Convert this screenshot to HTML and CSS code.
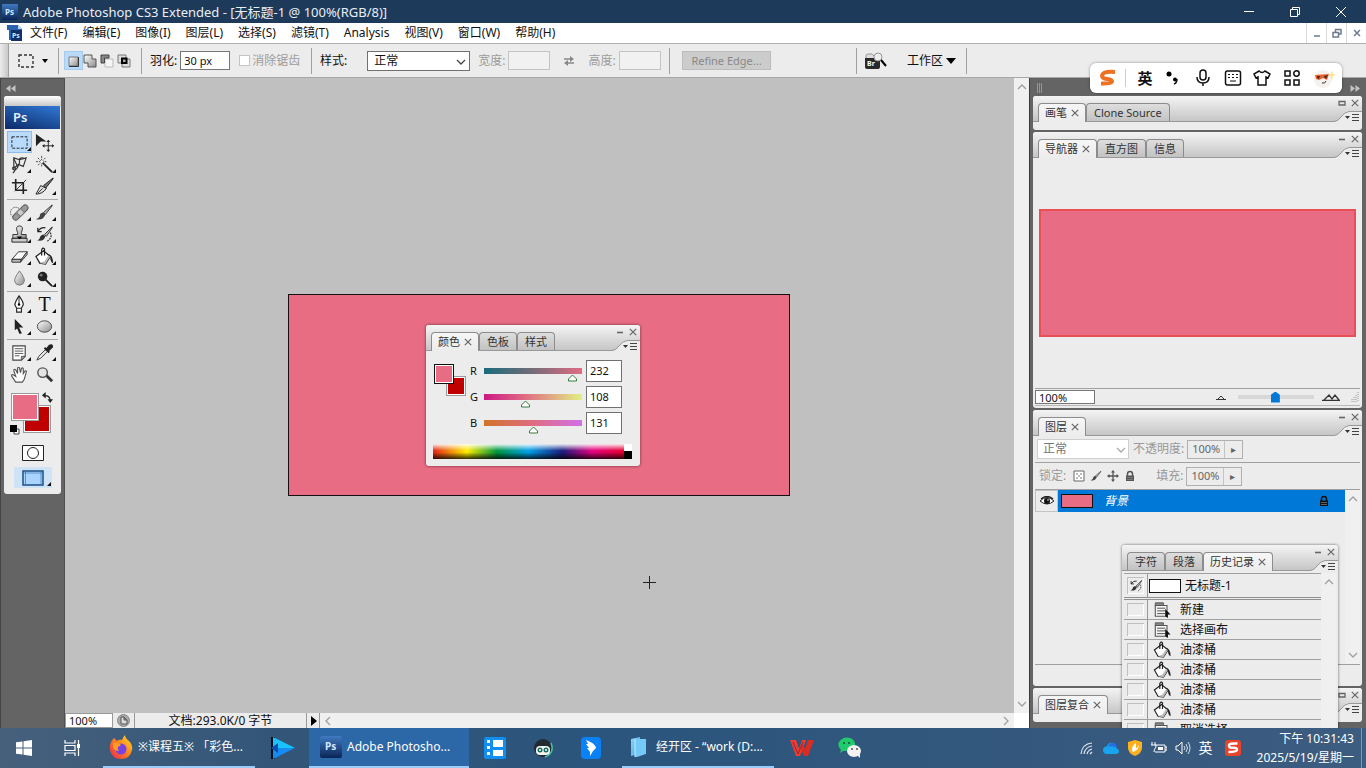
FILE: index.html
```
<!DOCTYPE html>
<html lang="zh-CN">
<head>
    <meta charset="UTF-8">
    <meta name="viewport" content="width=device-width, initial-scale=1.0">
    <title>Adobe Photoshop CS3 Extended</title>
    <link rel="stylesheet" href="styles.css">
</head>
<body>
    <!-- Shared icons -->
    <svg class="sprite" aria-hidden="true">
        <defs>
            <linearGradient id="psBlue" x1="0" y1="0" x2="0" y2="1"><stop offset="0" stop-color="#3f7ac0"/><stop offset="1" stop-color="#0b2457"/></linearGradient>
            <linearGradient id="steel" x1="0" y1="0" x2="1" y2="1"><stop offset="0" stop-color="#ffffff"/><stop offset="1" stop-color="#8c8c8c"/></linearGradient>
            <linearGradient id="fox" x1="1" y1="0" x2="0" y2="1"><stop offset="0" stop-color="#ffe226"/><stop offset="0.45" stop-color="#ff8a1e"/><stop offset="1" stop-color="#f0204e"/></linearGradient>
            <linearGradient id="sky" x1="0" y1="0" x2="1" y2="1"><stop offset="0" stop-color="#8fd9fb"/><stop offset="1" stop-color="#3d9fdc"/></linearGradient>
        </defs>
        <symbol id="i-x" viewBox="0 0 8 8"><path d="M.8.8l6.4 6.4M7.2.8L.8 7.2" stroke="#666" stroke-width="1.2"/></symbol>
        <symbol id="i-min" viewBox="0 0 8 8"><path d="M1 4.500h6" stroke="#666" stroke-width="1.6"/></symbol>
        <symbol id="i-max" viewBox="0 0 8 8"><path d="M1 2.500h6v3.500H1z" fill="none" stroke="#666" stroke-width="1.3"/></symbol>
        <symbol id="i-notch" viewBox="0 0 28 11"><path d="M0 10.500Q4 10.500 7 6T15 .5H28V11H0z" fill="#ececec"/><path d="M0 10.500Q4 10.500 7 6T15 .5H28" fill="none" stroke="#999"/><path d="M11 5h5l-2.500 3z" fill="#333"/><path d="M18 3.500h7M18 6.500h7M18 9.500h7" stroke="#444"/></symbol>
        <symbol id="i-chev" viewBox="0 0 10 10"><path d="M1 3l4 4 4-4" fill="none" stroke="currentColor" stroke-width="1.3"/></symbol>
        <symbol id="i-bucket" viewBox="0 0 20 20"><path d="M1 10l8-6 7 6-5 8-6-1z" fill="#fff" stroke="#222" stroke-width="1.300"/><path d="M5 17l6 1 5-8-2-1-4 6z" fill="#bbb"/><path d="M7 9V3q1-3 3-1v7" fill="none" stroke="#222" stroke-width="1.300"/><path d="M13 7q6 1 6 10-3-1-3-7z" fill="#222"/></symbol>
        <symbol id="i-brush" viewBox="0 0 20 20"><path d="M18 2l-9 8 2 2 7-9z" fill="#bbb" stroke="#333"/><path d="M9 10q-4 0-4 4-1 2-4 3 7 2 10-5z" fill="#444"/></symbol>
        <symbol id="i-histbrush" viewBox="0 0 20 20"><path d="M18 2l-8 8 2 2 6-9z" fill="#bbb" stroke="#333"/><path d="M9 10q-4 1-4 4-1 2-3 2 7 2 9-4z" fill="#333"/><path d="M3 7q3-5 8-4M3 3v4h4" fill="none" stroke="#222" stroke-width="1.300"/><path d="M16 8q3 5-3 9" fill="none" stroke="#333" stroke-width="1.300" stroke-dasharray="2 1"/></symbol>
        <symbol id="i-lock" viewBox="0 0 12 12"><path d="M3.500 6V4a2.500 2.500 0 015 0v2" fill="none" stroke="currentColor" stroke-width="1.500"/><path d="M2 5.500h8V11H2z" fill="currentColor"/><path d="M3 7.500h6M3 9.500h6" stroke="#999" stroke-width=".6"/></symbol>
        <symbol id="i-doc" viewBox="0 0 20 20"><path d="M2 2h9v3H2z" fill="#888" stroke="#555"/><path d="M2 5h13v12H2z" fill="#f5f5f5" stroke="#555" stroke-width="1.200"/><path d="M4 8h9M4 11h9M4 14h9" stroke="#444"/><path d="M13 9l6 6h-3v4l-3-2z" fill="#111"/></symbol>
        <symbol id="i-sogou" viewBox="0 0 20 20"><path d="M17 3Q5 2 4 6.500 4 9.500 9 10q5 .5 5 2.500-1 2.500-11 2" fill="none" stroke="currentColor" stroke-width="4"/></symbol>
    </svg>

    <header class="titlebar">
        <svg class="ps-mini" viewBox="0 0 16 16"><rect width="16" height="16" rx="1" fill="url(#psBlue)"/><text x="3" y="11" class="ps-text">Ps</text></svg>
        <h1>Adobe Photoshop CS3 Extended - [无标题-1 @ 100%(RGB/8)]</h1>
        <div class="window-buttons">
            <button aria-label="最小化"><svg viewBox="0 0 12 12"><path d="M1 5.500h10"/></svg></button>
            <button aria-label="还原"><svg viewBox="0 0 12 12"><path d="M1.500 3.500h7v7h-7zM3.500 3.500v-2h7v7h-2"/></svg></button>
            <button aria-label="关闭"><svg viewBox="0 0 12 12"><path d="M1 1l10 10M11 1L1 11"/></svg></button>
        </div>
    </header>

    <nav class="menubar">
        <svg class="doc-icon" viewBox="0 0 16 16"><path d="M0 0h11l4 4v11H2V5H0z" fill="#2b62ad"/><path d="M11 0l4 4h-4z" fill="#b8d4f5"/><path d="M4 5h11v11H4z" fill="#112f68"/><text x="5" y="13" class="ps-text small">Ps</text></svg>
        <a href="#">文件(F)</a>
        <a href="#">编辑(E)</a>
        <a href="#">图像(I)</a>
        <a href="#">图层(L)</a>
        <a href="#">选择(S)</a>
        <a href="#">滤镜(T)</a>
        <a href="#">Analysis</a>
        <a href="#">视图(V)</a>
        <a href="#">窗口(W)</a>
        <a href="#">帮助(H)</a>
        <div class="doc-buttons">
            <button aria-label="最小化文档"><svg viewBox="0 0 10 10"><path d="M2 8h6"/></svg></button>
            <button aria-label="还原文档"><svg viewBox="0 0 10 10"><path d="M1 4.500h5.500V9H1zM3.500 4V1.500H9V6H7"/></svg></button>
            <button aria-label="关闭文档"><svg viewBox="0 0 10 10"><path d="M2 2l6 6M8 2L2 8"/></svg></button>
        </div>
    </nav>

    <div class="options">
        <div class="grip"></div>
        <button class="tool-preset" aria-label="矩形选框工具">
            <svg width="16" height="14" viewBox="0 0 16 14"><path d="M1 1h14v12H1z" fill="none" stroke="#333" stroke-width="1.400" stroke-dasharray="3 2"/></svg>
            <svg width="6" height="4" viewBox="0 0 6 4"><path d="M0 0h6L3 4z"/></svg>
        </button>
        <div class="modes">
            <button class="on" aria-label="新选区"><svg viewBox="0 0 14 14"><path d="M3 3h9v9H3z" fill="url(#steel)" stroke="#777"/><path d="M3 12.500h9.500V3" fill="none" stroke="#333"/></svg></button>
            <button aria-label="添加到选区"><svg viewBox="0 0 14 14"><path d="M1 1h8v4h4v8H5V9H1z" fill="url(#steel)" stroke="#555"/></svg></button>
            <button aria-label="从选区减去"><svg viewBox="0 0 14 14"><path d="M5 5h8v8H5z" fill="#f5f5f5" stroke="#bbb"/><path d="M1 1h8v3H4.500v5H1z" fill="#888" stroke="#444"/></svg></button>
            <button aria-label="与选区交叉"><svg viewBox="0 0 14 14"><path d="M1 1h8v8H1zM5 5h8v8H5z" fill="#ddd" stroke="#777"/><path d="M5 4.500h4.500V9H5z" fill="#aaa" stroke="#000" stroke-width="2"/></svg></button>
        </div>
        <div class="field feather">
            <label for="feather">羽化:</label>
            <input type="text" id="feather" value="30 px">
            <input type="checkbox" id="alias" disabled>
            <label for="alias" class="off">消除锯齿</label>
        </div>
        <div class="field style-field">
            <label for="style">样式:</label>
            <div class="select-box">
                <select id="style"><option>正常</option></select>
                <svg class="chev"><use href="#i-chev"/></svg>
            </div>
            <label for="w" class="off">宽度:</label>
            <input type="text" id="w" disabled>
            <svg class="swap" viewBox="0 0 12 10"><path d="M1 3h7M4 7h7" stroke="#888" stroke-width="1.400"/><path d="M7 0l4 3-4 3zM5 4L1 7l4 3z" fill="#888"/></svg>
            <label for="h" class="off">高度:</label>
            <input type="text" id="h" disabled>
        </div>
        <div class="field refine"><button disabled>Refine Edge...</button></div>
        <div class="field work">
            <button aria-label="Bridge"><svg width="22" height="18" viewBox="0 0 22 18"><path d="M1 4q0-2 2-2h4l2 2h5v4H1z" fill="#ddd" stroke="#999"/><path d="M0 6h15v9q0 2-2 2H2q-2 0-2-2z" fill="#292929"/><text x="2" y="14" class="br-text">Br</text><circle cx="13" cy="5" r="4" fill="#eee" stroke="#999"/><path d="M16 8l5 6" stroke="#000" stroke-width="2"/></svg></button>
            <button class="workspace-button">工作区<svg width="10" height="6" viewBox="0 0 10 6"><path d="M0 0h10L5 6z"/></svg></button>
        </div>
    </div>

    <main class="workspace">
        <aside class="tool-dock">
            <div class="collapse"><svg width="10" height="7" viewBox="0 0 10 7"><path d="M4.500 0v7L0 3.500zM9.500 0v7L5 3.500z" fill="#c4c4c4"/></svg></div>
            <div class="toolbox">
                <div class="tool-grip"></div>
                <div class="tool-logo">Ps</div>
                <div class="tools">
                    <button class="more on" aria-label="选框"><svg viewBox="0 0 20 20"><path d="M2 4h16v12H2z" fill="none" stroke="#222" stroke-dasharray="3 1.500"/></svg></button>
                    <button aria-label="移动"><svg viewBox="0 0 20 20"><path d="M1 1l11 8-6 0-5 5z" fill="#222"/><path d="M14 8v11M8.500 13.500h11" stroke="#222"/><path d="M12 9.500L14 7l2 2.500zM12 17.500l2 2.500 2-2.500zM10 11.500l-2.500 2 2.500 2zM18 11.500l2 2-2 2z" fill="#222"/></svg></button>
                    <button class="more" aria-label="套索"><svg viewBox="0 0 20 20"><path d="M4 3l6 2 7-2-3 9-5-2-5 4z" fill="none" stroke="#333" stroke-width="1.200"/><path d="M4 4l4 8M3 19q4-4 2-6-3-1-2 2 3 2 5-2l2-5V4q3-2 5 0" fill="none" stroke="#333" stroke-width="1.200"/></svg></button>
                    <button class="more" aria-label="魔棒"><svg viewBox="0 0 20 20"><path d="M8 8l10 10" stroke="#222" stroke-width="2"/><path d="M7 1v12M1 7h12M3 3l8 8M11 3l-8 8" stroke="#444" stroke-dasharray="2 1"/><circle cx="7" cy="7" r="1.500" fill="#fff"/></svg></button>
                    <button aria-label="裁剪"><svg viewBox="0 0 20 20"><path d="M6 2v12h12M2 6h12v12" fill="none" stroke="#222" stroke-width="1.700"/><path d="M5 15L17 3" stroke="#333"/></svg></button>
                    <button class="more" aria-label="切片"><svg viewBox="0 0 20 20"><path d="M19 1L9 9l2 3 8-10z" fill="#777" stroke="#222"/><path d="M1 18L6 9l6 3q-4 6-11 6z" fill="#ddd" stroke="#222"/><path d="M3 17l5-5" stroke="#333"/></svg></button>
                </div>
                <div class="tools">
                    <button class="more" aria-label="修复画笔"><svg viewBox="0 0 20 20"><circle cx="6" cy="10" r="5.500" fill="none" stroke="#333" stroke-dasharray="1 1"/><g transform="rotate(-45 11 10)"><rect x="1" y="7" width="20" height="6" rx="3" fill="#999" stroke="#555"/><rect x="8" y="7" width="6" height="6" fill="#ccc" stroke="#777"/></g></svg></button>
                    <button class="more" aria-label="画笔"><svg><use href="#i-brush"/></svg></button>
                    <button class="more" aria-label="仿制图章"><svg viewBox="0 0 20 20"><path d="M8 8Q5 1 10 1t2 7v2h5v4H3v-4h5z" fill="url(#steel)" stroke="#333"/><path d="M2 14h16v4H2z" fill="#ccc" stroke="#222"/><path d="M7 12h6l-3 3z"/></svg></button>
                    <button class="more" aria-label="历史记录画笔"><svg><use href="#i-histbrush"/></svg></button>
                    <button class="more" aria-label="橡皮擦"><svg viewBox="0 0 20 20"><path d="M2 13l7-8h9l-6 8z" fill="#fafafa" stroke="#333"/><path d="M2 13v3h9l1-3zM12 13l6-8v3l-7 8z" fill="#bbb" stroke="#333"/></svg></button>
                    <button class="more" aria-label="油漆桶"><svg><use href="#i-bucket"/></svg></button>
                    <button class="more" aria-label="模糊"><svg viewBox="0 0 20 20"><path d="M10 2q6 8 5 11-1 4-5 4t-5-4Q4 10 10 2z" fill="url(#steel)" stroke="#777"/></svg></button>
                    <button class="more" aria-label="加深"><svg viewBox="0 0 20 20"><path d="M9 9l9 9" stroke="#222" stroke-width="2"/><circle cx="8" cy="8" r="5" fill="#222"/><circle cx="6.500" cy="6.500" r="1.500" fill="#777"/></svg></button>
                </div>
                <div class="tools">
                    <button class="more" aria-label="钢笔"><svg viewBox="0 0 20 20"><path d="M9.500 1q4.500 6 4.500 9l-2 4H7l-2-4q1-4 4.500-9zM7 14h5v4H7z" fill="#fff" stroke="#222" stroke-width="1.200"/><path d="M9.500 2v8" stroke="#222"/><circle cx="9.500" cy="10" r="1.300"/></svg></button>
                    <button class="more type" aria-label="文字">T</button>
                    <button class="more" aria-label="路径选择"><svg viewBox="0 0 20 20"><path d="M5 2l9 9H9.500l3 6-2.500 1-2.500-6L5 14z" fill="#222"/></svg></button>
                    <button class="more" aria-label="形状"><svg viewBox="0 0 20 20"><ellipse cx="10" cy="10" rx="7.500" ry="6" fill="url(#steel)" stroke="#444"/></svg></button>
                </div>
                <div class="tools">
                    <button class="more" aria-label="注释"><svg viewBox="0 0 20 20"><path d="M3 3h13v11l-4 4H3z" fill="#fff" stroke="#444" stroke-width="1.200"/><path d="M12 18v-4h4zM5 6h9M5 8.500h9M5 11h9M5 13.500h5" stroke="#555" fill="#aaa"/></svg></button>
                    <button class="more" aria-label="吸管"><svg viewBox="0 0 20 20"><path d="M2 18l2-4 7-7 2 2-7 7z" fill="#eee" stroke="#333"/><path d="M10 5l5 5M12 7l3-4q3-2 3 1l-4 4z" fill="#222" stroke="#222" stroke-width="2"/></svg></button>
                    <button aria-label="抓手"><svg viewBox="0 0 20 20"><path d="M6 18l-4-6q-1-2 1-2l3 2-2-6q0-2 2-1l2 4V4q0-2 2-1l1 5 1-4q1-2 2 0v5l2-3q2 0 1 2l-2 7-2 3z" fill="#fff" stroke="#555" stroke-width="1.200"/></svg></button>
                    <button aria-label="缩放"><svg viewBox="0 0 20 20"><path d="M11 10l7 7" stroke="#333" stroke-width="3"/><circle cx="8" cy="8" r="5" fill="#e5e5e5" stroke="#555" stroke-width="1.500"/></svg></button>
                </div>
                <div class="tool-colors">
                    <span class="back-color"></span>
                    <span class="front-color"></span>
                    <svg class="swap-colors" viewBox="0 0 12 12"><path d="M2 4q6-1 7 5" fill="none" stroke="#222" stroke-width="1.400"/><path d="M4 0v7L0 3.500zM6 8h6l-3 4z" fill="#222"/></svg>
                    <svg class="default-colors" viewBox="0 0 10 10"><path d="M4 4h5v5H4z" fill="#fff" stroke="#444"/><path d="M0 0h7v7H0z"/></svg>
                </div>
                <button class="quick-mask" aria-label="快速蒙版"><svg width="22" height="16" viewBox="0 0 22 16"><path d="M.5.5h21v15H.5z" fill="#fff" stroke="#222"/><circle cx="11" cy="8" r="5.500" fill="#fff" stroke="#222"/></svg></button>
                <button class="screen-mode more" aria-label="屏幕模式"><svg width="22" height="16" viewBox="0 0 22 16"><path d="M1 1h20v14H1z" fill="#a9d4ff" stroke="#1d4d86" stroke-width="1.500"/><path d="M3.500 1v14M19 1v14M1 3h20" stroke="#3b75b5" stroke-width=".7"/></svg></button>
            </div>
        </aside>

        <section class="document">
            <div class="canvas-area"><div class="artboard"></div></div>
            <div class="vscroll">
                <svg class="chev up"><use href="#i-chev"/></svg>
                <svg class="chev"><use href="#i-chev"/></svg>
            </div>
            <div class="status">
                <input type="text" class="zoom" aria-label="缩放比例" value="100%">
                <span class="status-icon"><svg width="13" height="13" viewBox="0 0 13 13"><circle cx="6.500" cy="6.500" r="6" fill="#aaa" stroke="#888"/><path d="M4 3h3l3 3v4H4zM7 3v3h3" fill="#ddd" stroke="#555"/></svg></span>
                <span class="doc-size">文档:293.0K/0 字节</span>
                <button class="status-more" aria-label="状态选项"><svg width="6" height="10" viewBox="0 0 6 10"><path d="M0 0l6 5-6 5z"/></svg></button>
                <div class="hscroll">
                    <svg class="chev left"><use href="#i-chev"/></svg>
                    <svg class="chev right"><use href="#i-chev"/></svg>
                </div>
            </div>
        </section>

        <aside class="panel-dock">
            <div class="dock-head">
                <svg width="6" height="10" viewBox="0 0 6 10"><path d="M.5 0v10M2.500 0v10M4.500 0v10" stroke="#aaa" stroke-width=".7"/></svg>
                <svg width="10" height="7" viewBox="0 0 10 7"><path d="M.5 0v7L5 3.500zM5.500 0v7L10 3.500z" fill="#c4c4c4"/></svg>
            </div>

            <section class="panel">
                <div class="panel-head">
                    <button class="tab active">画笔<svg><use href="#i-x"/></svg></button>
                    <button class="tab">Clone Source</button>
                    <div class="panel-tools"><svg class="mini"><use href="#i-max"/></svg><svg class="mini"><use href="#i-x"/></svg><svg class="notch"><use href="#i-notch"/></svg></div>
                </div>
                <div class="thin-body"></div>
            </section>

            <section class="panel">
                <div class="panel-head">
                    <button class="tab active">导航器<svg><use href="#i-x"/></svg></button>
                    <button class="tab">直方图</button>
                    <button class="tab">信息</button>
                    <div class="panel-tools"><svg class="mini"><use href="#i-min"/></svg><svg class="mini"><use href="#i-x"/></svg><svg class="notch"><use href="#i-notch"/></svg></div>
                </div>
                <div class="navigator"><div class="nav-preview"></div></div>
                <div class="nav-foot">
                    <input type="text" aria-label="导航器缩放" value="100%">
                    <svg class="hill" viewBox="0 0 10 6"><path d="M0 5.500h10M2 5l3-3 3 3" fill="none" stroke="#333"/></svg>
                    <input type="range" class="zoom-range" aria-label="缩放滑块" min="0" max="100" value="49">
                    <svg class="hill big" viewBox="0 0 18 8"><path d="M0 7.500h18M2 7l5-5 3 4 3-4 4 5" fill="none" stroke="#333" stroke-width="1.300"/></svg>
                    <svg class="resize" viewBox="0 0 10 10"><path d="M8 0v10M6 3v7M4 5v5M2 7v3" stroke="#999" stroke-dasharray="1 1"/></svg>
                </div>
            </section>

            <section class="panel layers">
                <div class="panel-head">
                    <button class="tab active">图层<svg><use href="#i-x"/></svg></button>
                    <div class="panel-tools"><svg class="mini"><use href="#i-min"/></svg><svg class="mini"><use href="#i-x"/></svg><svg class="notch"><use href="#i-notch"/></svg></div>
                </div>
                <div class="layer-opts">
                    <div class="select-box blend">
                        <select aria-label="混合模式" disabled><option>正常</option></select>
                        <svg class="chev"><use href="#i-chev"/></svg>
                    </div>
                    <label for="opacity">不透明度:</label>
                    <div class="percent"><input type="text" id="opacity" value="100%" disabled><span>▸</span></div>
                </div>
                <div class="layer-opts locks">
                    <span class="lock-label">锁定:</span>
                    <svg viewBox="0 0 12 12"><path d="M1 1h10v10H1z" fill="#fff" stroke="#666"/><path d="M3 3h2v2H3zM7 3h2v2H7zM5 5h2v2H5zM3 7h2v2H3zM7 7h2v2H7z" fill="#bbb"/></svg>
                    <svg><use href="#i-brush"/></svg>
                    <svg viewBox="0 0 12 12"><path d="M6 1v10M1 6h10" stroke="#555" stroke-width="1.300"/><path d="M4 2.500L6 0l2 2.500zM4 9.500L6 12l2-2.500zM2.500 4L0 6l2.500 2zM9.500 4L12 6 9.500 8z" fill="#555"/></svg>
                    <svg><use href="#i-lock"/></svg>
                    <label for="fill">填充:</label>
                    <div class="percent"><input type="text" id="fill" value="100%" disabled><span>▸</span></div>
                </div>
                <div class="layer-list">
                    <div class="layer-rows">
                        <div class="layer-row">
                            <span class="eye"><svg width="14" height="10" viewBox="0 0 14 10"><path d="M0 5q7-7 14 0-7 6-14 0z" fill="#fff" stroke="#222"/><circle cx="7" cy="5" r="3" fill="#111"/><path d="M1 3q6-5 12 0" fill="none" stroke="#222" stroke-width="1.500"/><circle cx="8" cy="4" r=".8" fill="#fff"/></svg></span>
                            <span class="layer-thumb"></span>
                            <em>背景</em>
                            <svg class="layer-lock"><use href="#i-lock"/></svg>
                        </div>
                    </div>
                    <div class="list-scroll">
                        <svg class="chev up"><use href="#i-chev"/></svg>
                        <svg class="chev"><use href="#i-chev"/></svg>
                    </div>
                </div>
                <div class="layer-foot"></div>
            </section>

            <section class="panel">
                <div class="panel-head">
                    <button class="tab active">图层复合<svg><use href="#i-x"/></svg></button>
                    <div class="panel-tools"><svg class="mini"><use href="#i-max"/></svg><svg class="mini"><use href="#i-x"/></svg><svg class="notch"><use href="#i-notch"/></svg></div>
                </div>
                <div class="thin-body"></div>
            </section>
        </aside>

        <!-- Floating windows -->
        <section class="panel floating color-window">
            <div class="panel-head">
                <button class="tab active">颜色<svg><use href="#i-x"/></svg></button>
                <button class="tab">色板</button>
                <button class="tab">样式</button>
                <div class="panel-tools"><svg class="mini"><use href="#i-min"/></svg><svg class="mini"><use href="#i-x"/></svg><svg class="notch"><use href="#i-notch"/></svg></div>
            </div>
            <div class="color-body">
                <div class="color-pair"><span class="pair-back"></span><span class="pair-front"></span></div>
                <div class="channels">
                    <div class="channel"><label for="r">R</label><input type="range" class="red" aria-label="红" max="255" value="232"><input type="text" id="r" value="232"></div>
                    <div class="channel"><label for="g">G</label><input type="range" class="green" aria-label="绿" max="255" value="108"><input type="text" id="g" value="108"></div>
                    <div class="channel"><label for="b">B</label><input type="range" class="blue" aria-label="蓝" max="255" value="131"><input type="text" id="b" value="131"></div>
                </div>
            </div>
            <div class="spectrum"><span></span></div>
        </section>

        <svg class="crosshair" viewBox="0 0 13 13"><path d="M6.500 0v13M0 6.500h13" stroke="#222"/></svg>

        <section class="panel floating history-window">
            <div class="panel-head">
                <button class="tab">字符</button>
                <button class="tab">段落</button>
                <button class="tab active">历史记录<svg><use href="#i-x"/></svg></button>
                <div class="panel-tools"><svg class="mini"><use href="#i-min"/></svg><svg class="mini"><use href="#i-x"/></svg><svg class="notch"><use href="#i-notch"/></svg></div>
            </div>
            <div class="history-body">
                <ul class="history">
                    <li class="snapshot"><span class="mark"><svg><use href="#i-histbrush"/></svg></span><span class="snap-thumb"></span>无标题-1</li>
                    <li><span class="mark"></span><svg><use href="#i-doc"/></svg>新建</li>
                    <li><span class="mark"></span><svg><use href="#i-doc"/></svg>选择画布</li>
                    <li><span class="mark"></span><svg><use href="#i-bucket"/></svg>油漆桶</li>
                    <li><span class="mark"></span><svg><use href="#i-bucket"/></svg>油漆桶</li>
                    <li><span class="mark"></span><svg><use href="#i-bucket"/></svg>油漆桶</li>
                    <li><span class="mark"></span><svg><use href="#i-bucket"/></svg>油漆桶</li>
                    <li><span class="mark"></span><svg><use href="#i-doc"/></svg>取消选择</li>
                </ul>
                <div class="list-scroll"><svg class="chev up"><use href="#i-chev"/></svg></div>
            </div>
        </section>
    </main>

    <!-- Input method toolbar -->
    <div class="ime">
        <svg class="ime-logo"><use href="#i-sogou"/></svg>
        <span class="ime-line"></span>
        <span class="ime-lang">英</span>
        <svg viewBox="0 0 18 18"><circle cx="5" cy="5" r="2.500"/><circle cx="11" cy="10.500" r="2"/><path d="M13 10q0 4-3 5" fill="none" stroke="#111" stroke-width="1.500"/></svg>
        <svg viewBox="0 0 18 18" class="line"><rect x="6" y="1" width="6" height="10" rx="3"/><path d="M3 8q0 6 6 6t6-6M9 14v3"/></svg>
        <svg viewBox="0 0 18 18" class="line"><rect x="1.500" y="2" width="15" height="14" rx="2"/><path d="M4 5.500h2M8 5.500h2M12 5.500h2M4 8.500h2M8 8.500h2M12 8.500h2M6 12h6" stroke-width="1"/></svg>
        <svg viewBox="0 0 18 18" class="line"><path d="M6 2q3 3 6 0l5 3-2 4-2-1v8H5V8L3 9 1 5z"/></svg>
        <svg viewBox="0 0 18 18" class="line"><rect x="2" y="2" width="5" height="5"/><circle cx="13.500" cy="4.500" r="2.700"/><rect x="2" y="11" width="5" height="5"/><rect x="11" y="11" width="5" height="5"/></svg>
        <svg viewBox="0 0 22 22" class="face"><circle cx="10" cy="12" r="9" fill="#f6f1ee"/><path d="M2 8l14-1-2 6-4-2-4 2-3-1z" fill="#e4632d"/><path d="M4 9l3 0-1 3-2-1zM11 9l4-1-2 4-2-2z" fill="#5a2a1c"/><path d="M19 3l1 4 3 1-3 1-1 4-1-4-3-1 3-1z" fill="#ffe38a"/><path d="M9 16q3 1 4-2" fill="none" stroke="#333"/></svg>
    </div>

    <footer class="taskbar">
        <button class="task" aria-label="开始"><svg width="16" height="16" viewBox="0 0 16 16"><path d="M0 2.300L6.500 1.400V7.500H0zM7.500 1.200L16 0v7.500H7.500zM0 8.500h6.500v6.100L0 13.700zM7.500 8.500H16V16l-8.500-1.200z" fill="#fff"/></svg></button>
        <button class="task" aria-label="任务视图"><svg width="17" height="16" viewBox="0 0 17 16"><path d="M1 0v3h10V0M1 16v-3h10v3M1 5.500h10v5H1zM14.500 0v16" fill="none" stroke="#fff" stroke-width="1.200"/><path d="M13 4h3v4h-3z" fill="#fff"/></svg></button>
        <button class="task wide"><svg width="24" height="24" viewBox="0 0 24 24"><path d="M5 3l3 3q2-2 5-1 1-3 3-5 0 3 4 6 4 4 3 9-2 9-11 9T1 15Q0 8 5 3z" fill="url(#fox)"/><circle cx="12" cy="14" r="5.500" fill="#7542e5"/><path d="M4 8q6-1 8 2l-3 2q-1 2 1 4-5 0-6-4z" fill="#ff9a22"/></svg><span>※课程五※ 「彩色...</span></button>
        <button class="task" aria-label="播放器"><svg width="24" height="24" viewBox="0 0 24 24"><path d="M0 1h4v22H0z" fill="#07101d"/><path d="M2 1l22 11H2z" fill="#1ac3ff"/><path d="M2 23l22-11H2z" fill="#168bf4"/><path d="M0 12l7-5v10z" fill="#0c4fae"/></svg></button>
        <button class="task wide current"><svg width="22" height="22" viewBox="0 0 22 22"><rect width="22" height="22" rx="2" fill="url(#psBlue)"/><text x="5" y="14" class="ps-text large">Ps</text></svg><span>Adobe Photosho...</span></button>
        <button class="task" aria-label="文档列表"><svg width="22" height="22" viewBox="0 0 22 22"><rect width="22" height="22" rx="2" fill="#128df0"/><path d="M9 3h10v7H9zM9 13h10v6H9zM3 3h3v3H3zM3 9h3v3H3zM3 15h3v3H3z" fill="#fff"/></svg></button>
        <button class="task" aria-label="助手"><svg width="22" height="22" viewBox="0 0 22 22"><circle cx="11" cy="11" r="9" fill="#222b31"/><path d="M19 6q4 10-6 14" fill="none" stroke="#46c7a4" stroke-width="1.500"/><rect x="4" y="9" width="14" height="9" rx="4" fill="#f3f4ee"/><circle cx="8" cy="13" r="2.500" fill="#176b63"/><circle cx="14" cy="13" r="2.500" fill="#176b63"/><circle cx="8" cy="13" r="1" fill="#fff"/><circle cx="14" cy="13" r="1" fill="#fff"/></svg></button>
        <button class="task" aria-label="钉钉"><svg width="20" height="22" viewBox="0 0 20 22"><rect width="20" height="22" rx="4" fill="#0a82f7"/><path d="M5 3q9 3 10 8l-3 3-3 5 0-4-3-4 2 0-3-4 2 0z" fill="#fff"/></svg></button>
        <button class="task wide"><svg class="folder" width="16" height="20" viewBox="0 0 16 20"><path d="M0 2l9-2v17l-9 2z" fill="url(#sky)"/><path d="M4 2l11 0v15l-9 3H4z" fill="#74c9f6"/><path d="M4 2v18" stroke="#c5ecff"/></svg><span>经开区 - “work (D:...</span></button>
        <button class="task" aria-label="WPS"><svg width="24" height="18" viewBox="0 0 24 18"><path d="M0 1h6l3 9 3-9h4l-6 16H6z" fill="#f23a2f"/><path d="M11 10l2-5 2 5 3-9h6l-6 16h-4z" fill="#d92c22"/><path d="M3 3l5 12 5-12" fill="none" stroke="#8d2a33"/></svg></button>
        <button class="task" aria-label="微信"><svg width="24" height="22" viewBox="0 0 24 22"><path d="M2 16l1-3q-4-4-2-8Q5-1 12 1q6 2 5 9l-9 4q-2 0-3 0z" fill="#20c96b"/><ellipse cx="16" cy="14" rx="7" ry="6" fill="#f2f2f2"/><path d="M19 18l3 3v-5z" fill="#f2f2f2"/><circle cx="6" cy="6" r="1" fill="#164f34"/><circle cx="11" cy="6" r="1" fill="#164f34"/><circle cx="14" cy="12" r="1" fill="#555"/><circle cx="19" cy="12" r="1" fill="#555"/></svg></button>
        <div class="tray">
            <svg viewBox="0 0 16 16"><path d="M2 14Q3 4 13 3M5 14Q6 7 13 6M8 14q1-4 5-5M11 14l2-2" fill="none" stroke="#e0e6ec" stroke-width="1.200"/></svg>
            <svg viewBox="0 0 16 16"><path d="M3 14q-3-1-3-4t4-4q2-4 6-3 4 1 3 5 3 1 3 3 0 3-3 3z" fill="#18a4ef"/><path d="M5 7q2-5 6-4 3 1 3 5-5-3-9-1z" fill="#256fe4"/></svg>
            <svg viewBox="0 0 16 16"><path d="M8 0l7 2v6q0 5-7 8-7-3-7-8V2z" fill="#ffb01f"/><path d="M9 3q-6 4-3 9 6-2 6-7-2 4-3 3z" fill="#fff"/></svg>
            <svg viewBox="0 0 16 16"><path d="M4 5h10v7H4M14 7h2v3h-2M1 2v3M4 2v3M0 5h5v2q-2 2-2 5" fill="none" stroke="#fff"/><path d="M7 7h5v3H7z" fill="#fff"/></svg>
            <svg viewBox="0 0 16 16"><path d="M1 6h2l4-4v12l-4-4H1z" fill="none" stroke="#fff"/><path d="M9 6q2 2 0 4M11 4q3 4 0 8M13 2q4 6 0 12" fill="none" stroke="#d5dfe8"/></svg>
            <span class="tray-lang">英</span>
            <svg class="tray-sogou" viewBox="0 0 16 16"><rect width="16" height="16" rx="3" fill="#e8432b"/><path d="M12.500 3.500Q4 3 4 5.500t4 2.300 4 2-8.500 2.300" fill="none" stroke="#fff" stroke-width="2.500"/></svg>
            <div class="clock"><div>下午 10:31:43</div><div>2025/5/19/星期一</div></div>
        </div>
    </footer>
</body>
</html>
```
FILE: styles.css
```
html, body {
    height: 100%;
    margin: 0;
}
body {
    display: flex;
    flex-direction: column;
    overflow: hidden;
    font-family: "Noto Sans", "Noto Sans CJK SC", sans-serif;
    font-size: 12px;
    line-height: 16px;
    color: #111111;
    background-color: #c0c0c0;
}
*, *::before, *::after {
    box-sizing: border-box;
}
button, input, select {
    font: inherit;
    color: inherit;
    margin: 0;
    padding: 0;
    border: none;
    border-radius: 0;
    background: none;
    flex-shrink: 0;
}
label {
    white-space: nowrap;
}
svg {
    display: block;
    flex-shrink: 0;
}
a {
    color: inherit;
    text-decoration: none;
}
.sprite {
    position: absolute;
    width: 0;
    height: 0;
}
.ps-text {
    font-size: 8px;
    font-weight: bold;
    fill: #d4e8ff;
}
.ps-text.small {
    font-size: 7px;
}
.ps-text.large {
    font-size: 10px;
}
.br-text {
    font-size: 7px;
    font-weight: bold;
    fill: #ffffff;
}
.chev {
    width: 10px;
    height: 10px;
    color: #a0a0a0;
}
.chev.up {
    transform: rotate(180deg);
}
.chev.left {
    transform: rotate(90deg);
}
.chev.right {
    transform: rotate(-90deg);
}

/* Title and menus */
.titlebar {
    flex: none;
    display: flex;
    align-items: center;
    height: 23px;
    padding-left: 2px;
    background-color: #1e3a5a;
    color: #e8eef5;
}
.titlebar h1 {
    margin: 0 0 0 5px;
    font-size: 13px;
    font-weight: normal;
}
.ps-mini {
    width: 16px;
    height: 16px;
}
.window-buttons {
    display: flex;
    margin-left: auto;
    padding-right: 2px;
}
.window-buttons button {
    width: 46px;
    height: 22px;
    display: flex;
    align-items: center;
    justify-content: center;
}
.window-buttons svg {
    width: 12px;
    height: 12px;
    fill: none;
    stroke: #ffffff;
}
.menubar {
    flex: none;
    display: flex;
    align-items: center;
    gap: 15px;
    height: 20px;
    padding-left: 7px;
    background-color: #ffffff;
}
.menubar .doc-icon {
    width: 16px;
    height: 16px;
    margin-right: -8px;
}
.doc-buttons {
    display: flex;
    align-self: stretch;
    margin-left: auto;
}
.doc-buttons button {
    width: 20px;
    border-left: 1px solid #d9d9d9;
    display: flex;
    align-items: center;
    justify-content: center;
}
.doc-buttons svg {
    width: 10px;
    height: 10px;
    fill: none;
    stroke: #6b7c8e;
    stroke-width: 1.5;
}

/* Options bar */
.options {
    flex: none;
    display: flex;
    align-items: center;
    height: 35px;
    background-color: #ececec;
    border-top: 1px solid #b0b0b0;
    border-bottom: 1px solid #a8a8a8;
}
.options .grip {
    align-self: stretch;
    width: 9px;
    background: linear-gradient(90deg, #ececec, #c8c8c8);
    border-right: 1px solid #a0a0a0;
}
.tool-preset {
    display: flex;
    align-items: center;
    gap: 8px;
    width: 50px;
    height: 26px;
    padding-left: 9px;
    border-right: 1px solid #a0a0a0;
}
.modes {
    display: flex;
    width: 83px;
    height: 26px;
    padding-left: 6px;
    align-items: center;
    border-right: 1px solid #a0a0a0;
}
.modes button {
    width: 17px;
    height: 17px;
    padding: 1px;
}
.modes button.on {
    background-color: #b9dafa;
    outline: 1px solid #a5cbec;
}
.modes svg {
    width: 14px;
    height: 14px;
}
.field {
    display: flex;
    align-items: center;
    height: 26px;
    padding: 0 8px;
    border-right: 1px solid #a0a0a0;
}
.field .off {
    color: #9c9c9c;
}
.field input[type="text"] {
    width: 42px;
    height: 19px;
    margin-left: 3px;
    border: 1px solid #777777;
    background-color: #ffffff;
    padding-left: 3px;
    font-size: 11px;
}
.field input[type="text"]:disabled {
    border-color: #c4c4c4;
    background-color: #f1f1f1;
}
.feather {
    width: 170px;
}
.feather input#feather {
    width: 50px;
}
.field input[type="checkbox"] {
    appearance: none;
    width: 11px;
    height: 11px;
    margin: 0 2px 0 9px;
    border: 1px solid #c4c4c4;
    background-color: #ffffff;
}
.style-field {
    width: 358px;
}
.select-box {
    position: relative;
}
.select-box select {
    appearance: none;
    width: 103px;
    height: 20px;
    margin: 0 8px 0 20px;
    padding-left: 6px;
    border: 1px solid #707070;
    background-color: #ffffff;
    opacity: 1;
}
.select-box .chev {
    position: absolute;
    top: 6px;
    right: 12px;
    color: #444444;
    pointer-events: none;
}
.swap {
    width: 12px;
    height: 10px;
    margin: 0 13px;
}
.refine {
    flex: 0 0 187px;
    padding-left: 12px;
}
.refine button {
    width: 89px;
    height: 19px;
    border: 1px solid #bcbcbc;
    background-color: #cccccc;
    color: #888888;
    font-size: 11px;
    line-height: 16px;
}
.work {
    width: 110px;
    gap: 20px;
}
.workspace-button {
    display: flex;
    align-items: center;
    gap: 3px;
}

/* Workspace */
.workspace {
    position: relative;
    flex: 1;
    min-height: 0;
    display: flex;
    overflow: hidden;
}
.tool-dock {
    flex: none;
    width: 65px;
    padding: 0 4px;
    background-color: #646464;
    border-left: 1px solid #444444;
    border-right: 1px solid #505050;
    border-top: 1px solid #505050;
}
.collapse {
    height: 17px;
    padding: 6px 0 0 1px;
}
.toolbox {
    width: 57px;
    margin-left: -1px;
    padding-bottom: 6px;
    background-color: #ececec;
    border-radius: 3px;
}
.tool-grip {
    height: 10px;
    background: linear-gradient(#ffffff, #c8c8c8);
    border-radius: 3px 3px 0 0;
}
.tool-logo {
    height: 23px;
    margin: 0 1px 2px;
    padding-left: 8px;
    background: linear-gradient(15deg, #0d2a66, #2f78d6);
    color: #e3f0ff;
    font-size: 13px;
    font-weight: 600;
    line-height: 23px;
}
.tools {
    display: grid;
    grid-template-columns: 25px 25px;
    grid-auto-rows: 22px;
    margin: 0 3px;
    padding-bottom: 2px;
}
.tools + .tools {
    border-top: 1px solid #a8a8a8;
    padding-top: 1px;
}
.tools button {
    display: flex;
    align-items: center;
    justify-content: center;
}
.tools svg {
    width: 19px;
    height: 19px;
}
.tools .on {
    background-color: #b9dafa;
    outline: 1px solid #8dbce8;
    outline-offset: -1px;
}
.more {
    position: relative;
}
.more::after {
    content: "";
    position: absolute;
    right: 1px;
    bottom: 2px;
    border-left: 4px solid transparent;
    border-bottom: 4px solid #111111;
}
.tools .type {
    font-family: "Liberation Serif", serif;
    font-size: 20px;
    line-height: 20px;
}
.tool-colors {
    position: relative;
    height: 44px;
    margin: 5px 3px 6px;
}
.front-color, .back-color {
    position: absolute;
    width: 28px;
    height: 28px;
    border: 1px solid #999999;
    box-shadow: inset 0 0 0 1px #ffffff;
}
.front-color {
    left: 4px;
    top: 1px;
    background-color: #e86c83;
}
.back-color {
    left: 16px;
    top: 13px;
    background-color: #c00000;
}
.swap-colors {
    position: absolute;
    right: 5px;
    top: 0;
    width: 11px;
    height: 11px;
}
.default-colors {
    position: absolute;
    left: 3px;
    bottom: 1px;
    width: 10px;
    height: 10px;
}
.quick-mask, .screen-mode {
    display: flex;
    align-items: center;
    justify-content: center;
    width: 38px;
    height: 21px;
    margin: 0 auto;
}
.screen-mode {
    margin-top: 4px;
    background-color: #cfe3f7;
}

/* Document window */
.document {
    flex: 1;
    min-width: 0;
    display: grid;
    grid-template-columns: 1fr 15px;
    grid-template-rows: 1fr 15px;
    background-color: #ffffff;
}
.canvas-area {
    display: flex;
    align-items: center;
    justify-content: center;
    padding: 0 2px 2px 0;
    background-color: #c0c0c0;
}
.artboard {
    width: 502px;
    height: 202px;
    border: 1px solid #111111;
    background-color: #e86c83;
}
.vscroll, .list-scroll {
    display: flex;
    flex-direction: column;
    align-items: center;
    justify-content: space-between;
    padding: 4px 0;
    background-color: #f0f0f0;
}
.status {
    display: flex;
    background-color: #ececec;
}
.status .zoom {
    width: 48px;
    padding-left: 3px;
    border: 1px solid #999999;
    background-color: #ffffff;
    font-size: 11px;
    line-height: 13px;
}
.status-icon {
    width: 22px;
    padding: 1px 4px;
    border-right: 1px solid #999999;
}
.doc-size {
    width: 171px;
    text-align: center;
    line-height: 16px;
}
.status-more {
    width: 14px;
    padding-left: 4px;
    border: 1px solid #999999;
    border-width: 0 1px;
}
.hscroll {
    flex: 1;
    display: flex;
    align-items: center;
    justify-content: space-between;
    padding: 0 3px;
    background-color: #f0f0f0;
}

/* Panels */
.panel-dock {
    flex: none;
    display: flex;
    flex-direction: column;
    gap: 2px;
    width: 337px;
    padding: 0 4px 6px 3px;
    background-color: #646464;
    border-left: 1px solid #3c3c3c;
}
.dock-head {
    display: flex;
    align-items: center;
    justify-content: space-between;
    height: 16px;
    padding: 4px 2px 0 4px;
}
.panel {
    background-color: #ececec;
    border-radius: 3px;
}
.panel-head {
    display: flex;
    align-items: flex-end;
    height: 26px;
    padding-left: 5px;
    border-bottom: 1px solid #999999;
    border-radius: 3px 3px 0 0;
    background: linear-gradient(#f4f4f4, #c6c6c6);
}
.tab {
    display: flex;
    align-items: center;
    gap: 4px;
    height: 18px;
    padding: 0 7px;
    border: 1px solid #8c8c8c;
    border-bottom: none;
    border-radius: 4px 4px 0 0;
    background: linear-gradient(#dedede, #c2c2c2);
    color: #333333;
    font-size: 11px;
    line-height: 16px;
    white-space: nowrap;
}
.tab.active {
    height: 19px;
    margin-bottom: -1px;
    padding: 0 6px;
    background: linear-gradient(#f6f6f6, #ececec);
}
.tab svg {
    width: 8px;
    height: 8px;
}
.panel-tools {
    display: flex;
    flex-wrap: wrap;
    justify-content: flex-end;
    align-content: space-between;
    gap: 0 5px;
    width: 28px;
    height: 25px;
    margin: 0 0 -1px auto;
}
.mini {
    width: 8px;
    height: 8px;
    margin-top: 2px;
}
.mini + .mini {
    margin-right: 3px;
}
.notch {
    width: 28px;
    height: 11px;
}
.thin-body {
    height: 8px;
}
.navigator {
    height: 230px;
    padding: 51px 6px 0;
}
.nav-preview {
    height: 128px;
    border: 2px solid #e85055;
    background-color: #e86c83;
}
.nav-foot {
    display: flex;
    align-items: center;
    height: 18px;
    margin: 0 2px 2px;
    border-top: 1px solid #a0a0a0;
    border-bottom: 1px solid #b8b8b8;
}
.nav-foot input[type="text"] {
    width: 60px;
    height: 14px;
    margin-right: auto;
    padding-left: 3px;
    border: 1px solid #777777;
    background-color: #ffffff;
    font-size: 11px;
    line-height: 12px;
}
.hill {
    width: 10px;
    height: 6px;
}
.hill.big {
    width: 18px;
    height: 8px;
}
.resize {
    width: 10px;
    height: 10px;
    margin-left: 10px;
}
.zoom-range {
    appearance: none;
    width: 76px;
    height: 12px;
    margin: 0 8px 0 12px;
    background: linear-gradient(#d8d8d8, #d8d8d8) center / 100% 4px no-repeat;
}
.zoom-range::-webkit-slider-thumb {
    appearance: none;
    width: 9px;
    height: 11px;
    background-color: #0078d7;
    clip-path: polygon(0 30%, 50% 0, 100% 30%, 100% 100%, 0 100%);
}
.layers {
    flex: 1;
    display: flex;
    flex-direction: column;
    min-height: 0;
}
.layer-opts {
    display: flex;
    align-items: center;
    height: 27px;
    margin: 0 2px;
    padding-left: 2px;
    border-bottom: 1px solid #a0a0a0;
    color: #999999;
}
.layer-opts .blend select {
    width: 92px;
    margin: 0 4px 0 0;
    padding-left: 5px;
    border-color: #cfcfcf;
    color: #777777;
}
.layer-opts .blend .chev {
    right: 7px;
    color: #aaaaaa;
}
.layer-opts label {
    margin-right: 3px;
}
.locks {
    gap: 5px;
}
.locks svg {
    width: 12px;
    height: 12px;
    color: #555555;
}
.locks .lock-label {
    margin: 0 2px;
}
.locks label {
    margin: 0 -2px 0 15px;
}
.percent {
    display: flex;
    width: 56px;
    height: 19px;
    border: 1px solid #b0b0b0;
    color: #666666;
    line-height: 16px;
}
.percent input {
    width: 37px;
    padding-left: 4px;
    border-right: 1px solid #c4c4c4;
    font-size: 11px;
}
.percent span {
    flex: 1;
    text-align: center;
    font-size: 10px;
}
.layer-list {
    flex: 1;
    display: flex;
    margin: 0 2px;
    border-bottom: 1px solid #a0a0a0;
}
.layer-rows {
    flex: 1;
}
.list-scroll {
    width: 15px;
}
.layer-row {
    display: flex;
    align-items: center;
    height: 22px;
    background-color: #0078d7;
    color: #ffffff;
}
.eye {
    display: flex;
    align-items: center;
    justify-content: center;
    width: 23px;
    height: 22px;
    background-color: #ececec;
    border: 1px solid #c4c4c4;
}
.layer-thumb {
    width: 32px;
    height: 14px;
    margin: 0 11px 0 3px;
    border: 1px solid #111111;
    background-color: #e86c83;
}
.layer-lock {
    width: 12px;
    height: 12px;
    margin: 0 15px 0 auto;
    color: #111111;
}
.layer-foot {
    height: 21px;
}

/* Floating windows are placed freely over the workspace */
.floating {
    position: absolute;
    box-shadow: 0 0 3px rgba(0, 0, 0, 0.6);
}
.color-window {
    left: 426px;
    top: 247px;
    width: 214px;
    padding-bottom: 7px;
}
.color-body {
    display: flex;
    padding: 7px 8px 8px;
}
.color-pair {
    position: relative;
    width: 36px;
}
.pair-front, .pair-back {
    position: absolute;
    width: 20px;
    height: 20px;
    border: 1px solid #111111;
    box-shadow: inset 0 0 0 1px #ffffff;
}
.pair-front {
    left: 0;
    top: 6px;
    background-color: #e86c83;
}
.pair-back {
    left: 12px;
    top: 18px;
    border-color: #999999;
    background-color: #c00000;
}
.channel {
    display: flex;
    align-items: center;
    height: 26px;
}
.channel label {
    width: 9px;
    font-size: 11px;
}
.channel input[type="text"] {
    width: 36px;
    height: 22px;
    padding: 0 0 2px 3px;
    border: 1px solid #707070;
    background-color: #ffffff;
    font-size: 11px;
}
.channel input[type="range"] {
    appearance: none;
    width: 107px;
    height: 20px;
    background-position: center 7px;
    background-size: calc(100% - 9px) 6px;
    background-repeat: no-repeat;
}
.channel input[type="range"]::-webkit-slider-thumb {
    appearance: none;
    width: 9px;
    height: 8px;
    margin-top: 13px;
    background: url("data:image/svg+xml,%3Csvg xmlns='http://www.w3.org/2000/svg' viewBox='0 0 9 8'%3E%3Cpath d='M4.500 1L8.500 5v2h-8V5z' fill='%23fff' stroke='%23347a3c'/%3E%3C/svg%3E");
}
.channel .red {
    background-image: linear-gradient(90deg, #1a6c7c, #6d6c78 45%, #e06c83);
}
.channel .green {
    background-image: linear-gradient(90deg, #cc1883, #e06c83 42%, #e0f083);
}
.channel .blue {
    background-image: linear-gradient(90deg, #d07428, #e06c83 51%, #d070e8);
}
.spectrum {
    display: flex;
    justify-content: flex-end;
    height: 15px;
    margin: 0 8px 0 7px;
    background: linear-gradient(rgba(255, 255, 255, 0.9), rgba(255, 255, 255, 0) 45%, rgba(0, 0, 0, 0) 55%, rgba(0, 0, 0, 0.8)), linear-gradient(90deg, #e52218, #ffee00 17%, #00963f 32%, #009fe8 48%, #1b1c7d 65%, #e4007f 80%, #e50018);
}
.spectrum span {
    width: 8px;
    background: linear-gradient(#ffffff 50%, #000000 50%);
}
.crosshair {
    position: absolute;
    left: 643px;
    top: 498px;
    width: 13px;
    height: 13px;
}
.history-window {
    right: 28px;
    top: 467px;
    width: 216px;
}
.history-body {
    display: flex;
    margin: 2px 2px 0;
}
.history {
    flex: 1;
    margin: 0;
    padding: 0;
    list-style: none;
    border-top: 1px solid #a0a0a0;
}
.history li {
    display: flex;
    align-items: center;
    gap: 8px;
    height: 20px;
    border-bottom: 1px solid #a0a0a0;
}
.history .mark {
    align-self: stretch;
    display: flex;
    align-items: center;
    justify-content: center;
    width: 24px;
    margin-right: -3px;
    border-right: 1px solid #999999;
    box-shadow: inset 0 0 0 3px #ececec, inset 4px 4px 0 #c0c0c0, inset -4px -4px 0 #ffffff;
}
.history li > svg {
    width: 19px;
    height: 18px;
}
.history .snapshot {
    height: 26px;
    gap: 4px;
    border-bottom: 3px double #909090;
}
.history .snapshot .mark svg {
    width: 14px;
    height: 14px;
}
.snap-thumb {
    width: 32px;
    height: 14px;
    border: 1px solid #111111;
    background-color: #ffffff;
}

/* Input method toolbar */
.ime {
    position: absolute;
    right: 24px;
    top: 63px;
    display: flex;
    align-items: center;
    justify-content: space-between;
    width: 252px;
    height: 30px;
    padding: 0 7px;
    border-radius: 6px;
    background-color: #ffffff;
    box-shadow: 0 0 3px rgba(0, 0, 0, 0.4);
}
.ime svg {
    width: 18px;
    height: 18px;
}
.ime .ime-logo {
    width: 22px;
    height: 22px;
    padding-top: 2px;
    color: #ee7022;
}
.ime .line {
    fill: none;
    stroke: #111111;
    stroke-width: 1.5;
}
.ime .face {
    width: 22px;
    height: 22px;
}
.ime-line {
    width: 1px;
    height: 18px;
    margin-left: -6px;
    background-color: #cccccc;
}
.ime-lang {
    font-size: 15px;
    font-weight: bold;
}

/* Taskbar */
.taskbar {
    position: relative;
    flex: none;
    display: flex;
    height: 40px;
    background: linear-gradient(90deg, #46607c, #335678 20%, #2b557d 45%, #34587d 75%, #3d5d80);
    color: #ffffff;
}
.task {
    display: flex;
    align-items: center;
    justify-content: center;
    width: 48px;
}
.task.wide {
    justify-content: flex-start;
    gap: 5px;
    width: 152px;
    margin: 0 4px 0 7px;
    padding-left: 6px;
    border-bottom: 2px solid #9bcbf8;
    white-space: nowrap;
}
.task.wide.current {
    width: 160px;
    margin: 0 2px;
    padding-left: 11px;
    background-color: #2c67a7;
}
.task .folder {
    margin: 0 4px 0 3px;
}
.tray {
    display: flex;
    align-items: center;
    gap: 8px;
    margin-left: auto;
    margin-right: 4px;
    padding-right: 7px;
    border-right: 1px solid #8296ab;
}
.tray svg {
    width: 16px;
    height: 16px;
}
.tray-lang {
    font-size: 14px;
}
.tray .tray-sogou {
    margin-left: 4px;
}
.clock {
    margin-left: 8px;
    text-align: right;
    line-height: 19px;
    white-space: nowrap;
}
```
